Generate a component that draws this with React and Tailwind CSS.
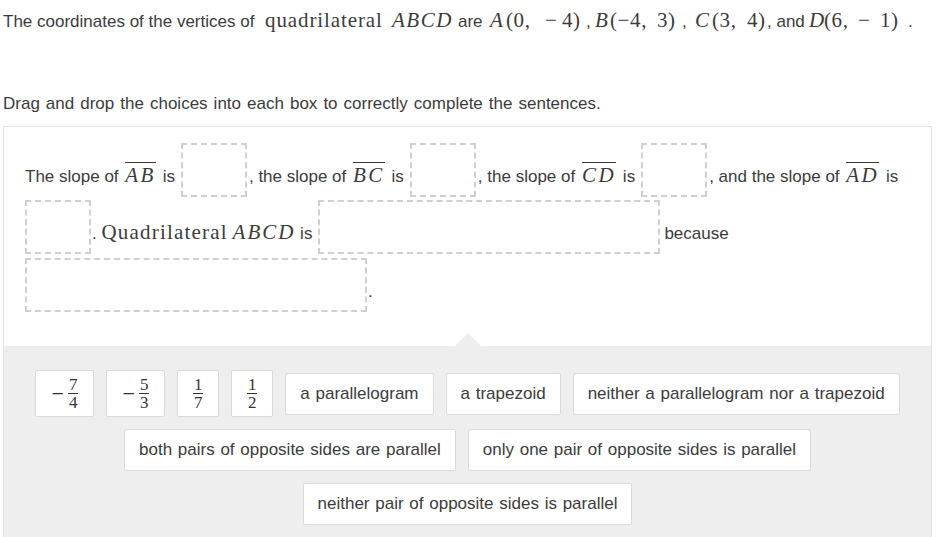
import React from "react";

const sans = "font-['Liberation_Sans',Arial,sans-serif]";
const serif = "font-['Liberation_Serif','Times_New_Roman',serif]";

function Mi({ children }) {
  return (
    <span className={`${serif} italic text-[21px] leading-none tracking-[2px]`}>{children}</span>
  );
}

function Ol({ children }) {
  return (
    <span className={`${serif} italic text-[21px] leading-none tracking-[2.5px] inline-block border-t border-[#3b3b3b] pt-[2px] mx-[2px]`}>
      {children}
    </span>
  );
}

function Box({ w = "w-[66px]", ml = "ml-[6px]", mr = "mr-[3px]" }) {
  return (
    <div className={`${w} h-[54px] shrink-0 border-2 border-dashed border-[#cfcfcf] bg-white ${ml} ${mr}`} />
  );
}

function Frac({ neg, n, d }) {
  return (
    <div className="h-[47px] px-[15px] flex items-center justify-center bg-white border border-[#d9d9d9] rounded-[2px]">
      <span className={`${serif} flex items-center text-[#333]`}>
        {neg && (
          <span className="w-[13px] mr-[4px] text-[22px] leading-none text-center">−</span>
        )}
        <span className="inline-flex flex-col items-center text-[17px] leading-[13px]">
          <span>{n}</span>
          <span className="w-[10px] my-[2px] border-t-[1.5px] border-[#333]" />
          <span>{d}</span>
        </span>
      </span>
    </div>
  );
}

function Tile({ children }) {
  return (
    <div className="h-[42px] px-[14px] flex items-center bg-white border border-[#d9d9d9] rounded-[2px] text-[17px] [word-spacing:1px] text-[#3b3b3b] whitespace-nowrap">
      {children}
    </div>
  );
}

const m = `${serif} text-[21px] leading-[24px] shrink-0`;
const mi = `${serif} italic text-[21px] leading-[24px] shrink-0`;
const t = "leading-[24px] shrink-0";

export default function App() {
  return (
    <div className={`${sans} w-[940px] h-[537px] overflow-hidden bg-white text-[#3b3b3b] text-[17px]`}>
      <div className="flex items-baseline h-[32px] pl-[3px] pt-[8px] whitespace-nowrap">
        <span className={`${t} w-[262px]`}>The coordinates of the vertices of</span>
        <span className={`${m} w-[127px] tracking-[0.9px]`}>quadrilateral</span>
        <span className={`${mi} w-[66px] tracking-[1.5px]`}>ABCD</span>
        <span className={`${t} w-[32px]`}>are</span>
        <span className={`${mi} w-[16px]`}>A</span>
        <span className={`${m} w-[39px] tracking-[0.6px]`}>(0,</span>
        <span className={`${m} w-[17px]`}>−</span>
        <span className={`${m} w-[24px] tracking-[0.6px]`}>4)</span>
        <span className={`${t} w-[9px]`}>,</span>
        <span className={`${mi} w-[15px]`}>B</span>
        <span className={`${m} w-[47px] tracking-[0.6px]`}>(−4,</span>
        <span className={`${m} w-[25px] tracking-[0.6px]`}>3)</span>
        <span className={`${t} w-[13px]`}>,</span>
        <span className={`${mi} w-[17px]`}>C</span>
        <span className={`${m} w-[35px] tracking-[0.6px]`}>(3,</span>
        <span className={`${m} w-[20px] tracking-[0.6px]`}>4)</span>
        <span className={`${t} w-[42px]`}>, and</span>
        <span className={`${mi} w-[15px]`}>D</span>
        <span className={`${m} w-[34px] tracking-[0.6px]`}>(6,</span>
        <span className={`${m} w-[22px]`}>−</span>
        <span className={`${m} w-[28px] tracking-[0.6px]`}>1)</span>
        <span className={t}>.</span>
      </div>

      <p className="pl-[3px] mt-[60px] leading-[24px] text-[17px] [word-spacing:1.3px] whitespace-nowrap">
        Drag and drop the choices into each box to correctly complete the sentences.
      </p>

      <div className="ml-[3px] mt-[10px] w-[929px] border border-[#e3e3e3]">
        <div className="pl-[21px] pt-[16px] pb-[34px] flex flex-col gap-[3px] whitespace-nowrap">
          <div className="flex items-end">
            <span className="pb-[10px] leading-[20px]">
              The slope of <Ol>AB</Ol> is
            </span>
            <Box mr="mr-[2px]" />
            <span className="pb-[10px] leading-[20px]">
              , the slope of <Ol>BC</Ol> is
            </span>
            <Box mr="mr-[2px]" />
            <span className="pb-[10px] leading-[20px]">
              , the slope of <Ol>CD</Ol> is
            </span>
            <Box mr="mr-[2px]" />
            <span className="pb-[10px] leading-[20px]">
              , and the slope of <Ol>AD</Ol> is
            </span>
          </div>
          <div className="flex items-end">
            <Box ml="ml-0" mr="mr-[1px]" />
            <span className="pb-[10px] leading-[20px]">
              . <span className={`${serif} text-[21px] leading-none tracking-[1.2px]`}>Quadrilateral</span>{" "}
              <Mi>ABCD</Mi> is
            </span>
            <Box w="w-[342px]" mr="mr-[4px]" />
            <span className="pb-[10px] leading-[20px]">because</span>
          </div>
          <div className="flex items-end mt-[1px]">
            <Box w="w-[342px]" ml="ml-0" mr="mr-[1px]" />
            <span className="pb-[10px] leading-[20px]">.</span>
          </div>
        </div>

        <div className="relative bg-[#eeeeee] px-6 pt-6 pb-6">
          <div className="absolute left-1/2 -translate-x-1/2 -top-[13px] w-0 h-0 border-x-[13px] border-x-transparent border-b-[13px] border-b-[#eeeeee]" />
          <div className="flex flex-wrap justify-center items-center gap-3">
            <Frac neg n="7" d="4" />
            <Frac neg n="5" d="3" />
            <Frac n="1" d="7" />
            <Frac n="1" d="2" />
            <Tile>a parallelogram</Tile>
            <Tile>a trapezoid</Tile>
            <Tile>neither a parallelogram nor a trapezoid</Tile>
            <Tile>both pairs of opposite sides are parallel</Tile>
            <Tile>only one pair of opposite sides is parallel</Tile>
            <Tile>neither pair of opposite sides is parallel</Tile>
          </div>
        </div>
      </div>
    </div>
  );
}
